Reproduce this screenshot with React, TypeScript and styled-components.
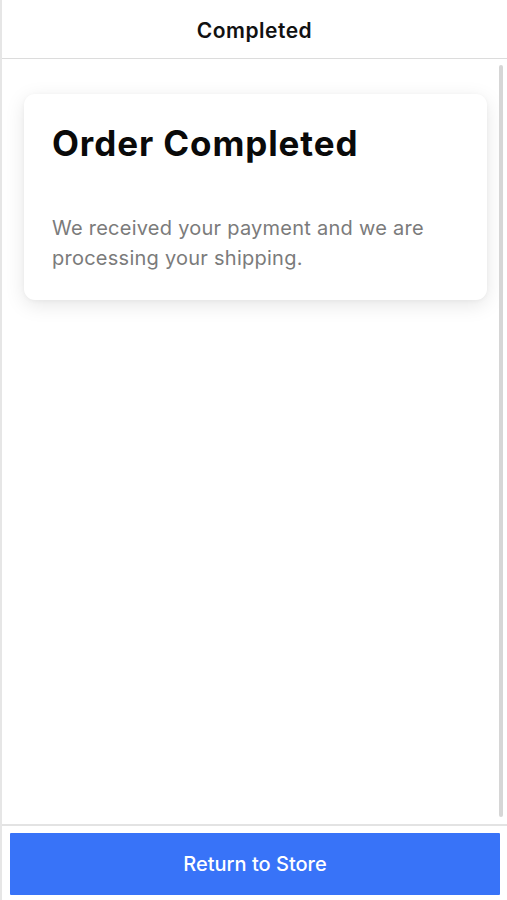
import React from "react";
import styled, { createGlobalStyle } from "styled-components";

const Global = createGlobalStyle`
  html, body { margin: 0; padding: 0; background: #ffffff; }
  body { font-family: Inter, "Noto Sans", "Liberation Sans", sans-serif; -webkit-font-smoothing: antialiased; }
  * { box-sizing: border-box; }
`;

const Page = styled.div`
  display: flex;
  flex-direction: column;
  width: 507px;
  height: 900px;
  border-left: 2px solid #e6e6e6;
  background: #ffffff;
`;

const Header = styled.header`
  flex: 0 0 59px;
  display: flex;
  align-items: center;
  justify-content: center;
  border-bottom: 1px solid #dcdcdc;
  padding-top: 3px;
`;

const HeaderTitle = styled.h1`
  margin: 0;
  font-size: 21px;
  font-weight: 600;
  color: #111111;
  letter-spacing: 0.5px;
`;

const Content = styled.main`
  position: relative;
  flex: 1;
  padding: 35px 20px 0 22px;
`;

const Scrollbar = styled.div`
  position: absolute;
  top: 6px;
  bottom: 7px;
  right: 4px;
  width: 4px;
  border-radius: 2px;
  background: #d6d6d6;
`;

const Card = styled.section`
  background: #ffffff;
  border-radius: 11px;
  box-shadow: 0 5px 20px rgba(0, 0, 0, 0.1), 0 1px 4px rgba(0, 0, 0, 0.04);
  padding: 29px 28px 27px 28px;
`;

const CardTitle = styled.h2`
  margin: 0;
  font-size: 35px;
  line-height: 41px;
  font-weight: 700;
  color: #0a0a0a;
  letter-spacing: 0.9px;
`;

const CardText = styled.p`
  margin: 49px 0 0;
  font-size: 20px;
  line-height: 30px;
  font-weight: 400;
  color: #7b7b7b;
  letter-spacing: 0.25px;
  max-width: 390px;
`;

const Footer = styled.footer`
  flex: 0 0 auto;
  border-top: 2px solid #e3e3e3;
  padding: 7px 7px 5px 8px;
`;

const PrimaryButton = styled.button`
  display: flex;
  align-items: center;
  justify-content: center;
  width: 100%;
  height: 62px;
  border: none;
  border-radius: 1px;
  background: #3873f8;
  color: #ffffff;
  font-family: inherit;
  font-size: 20px;
  font-weight: 500;
  cursor: pointer;
`;

export default function App() {
  return (
    <>
      <Global />
      <Page>
        <Header>
          <HeaderTitle>Completed</HeaderTitle>
        </Header>
        <Content>
          <Card>
            <CardTitle>Order Completed</CardTitle>
            <CardText>We received your payment and we are processing your shipping.</CardText>
          </Card>
          <Scrollbar />
        </Content>
        <Footer>
          <PrimaryButton>Return to Store</PrimaryButton>
        </Footer>
      </Page>
    </>
  );
}
